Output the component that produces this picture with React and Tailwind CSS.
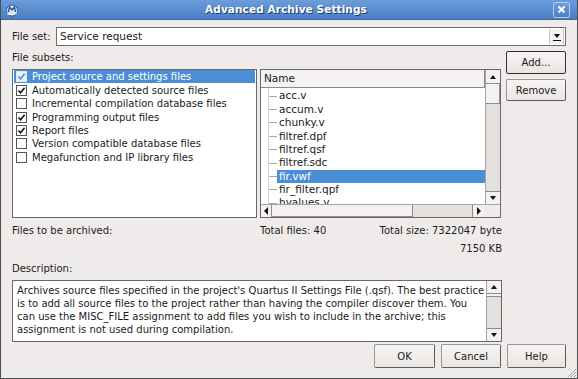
import React from "react";

const subsets = [
  { label: "Project source and settings files", checked: true, selected: true },
  { label: "Automatically detected source files", checked: true },
  { label: "Incremental compilation database files", checked: false },
  { label: "Programming output files", checked: true },
  { label: "Report files", checked: true },
  { label: "Version compatible database files", checked: false },
  { label: "Megafunction and IP library files", checked: false },
];

const files = [
  "acc.v",
  "accum.v",
  "chunky.v",
  "filtref.dpf",
  "filtref.qsf",
  "filtref.sdc",
  "fir.vwf",
  "fir_filter.qpf",
  "hvalues.v",
];

function Arrow({ dir }) {
  const pts = {
    up: "1,5 4,1 7,5",
    down: "1,1 4,5 7,1",
    left: "5,0 1,4 5,8",
    right: "1,0 5,4 1,8",
  }[dir];
  const vertical = dir === "up" || dir === "down";
  return (
    <svg width={vertical ? 8 : 6} height={vertical ? 6 : 8} viewBox={vertical ? "0 0 8 6" : "0 0 6 8"}>
      <polygon points={pts} fill="#111" />
    </svg>
  );
}

function CheckBox({ checked, selected }) {
  return (
    <div
      className={`w-[11px] h-[11px] flex items-center justify-center shrink-0 border ${
        selected ? "bg-[#eaf2fc] border-[#dce8f7]" : "bg-white border-[#555]"
      }`}
    >
      {checked && (
        <svg width="9" height="9" viewBox="0 0 9 9">
          <path
            d="M1.5 4.5 L3.6 6.8 L7.6 1.8"
            fill="none"
            stroke={selected ? "#4a89d3" : "#111"}
            strokeWidth="1.6"
          />
        </svg>
      )}
    </div>
  );
}

function Button({ children, isDefault, className = "" }) {
  return (
    <div
      className={`flex items-center justify-center rounded-[2px] bg-gradient-to-b from-[#f7f5f4] to-[#e9e5e2] ${
        isDefault
          ? "border border-[#2f2f2f]"
          : "border border-[#9a9794] border-r-[#5e5c5a] border-b-[#5e5c5a]"
      } ${className}`}
    >
      {children}
    </div>
  );
}

export default function App() {
  return (
    <div className="relative w-[578px] h-[379px] flex flex-col bg-[#efebea] border border-t-0 border-[#4e4e4e] font-['DejaVu_Sans',sans-serif] text-[10px] text-[#1b1b1b] overflow-hidden">
      {/* Title bar */}
      <div className="h-[20px] shrink-0 flex items-center px-[4px] bg-gradient-to-b from-[#6b9ddb] to-[#4a7dc3] border-b border-[#3b689f]">
        <svg width="14" height="14" viewBox="0 0 14 14" className="shrink-0">
          <circle cx="7" cy="7.5" r="5.5" fill="#d9e6f6" stroke="#2b5896" strokeWidth="1" />
          <path d="M3.5 9 L4.5 4 L7 7 L9.5 4 L10.5 9" fill="none" stroke="#1f4f8f" strokeWidth="1.3" />
          <path d="M2 11 Q7 13 12 10" fill="none" stroke="#ffffff" strokeWidth="1" />
        </svg>
        <div className="flex-1 text-center font-bold text-[10.5px] text-white [text-shadow:1px_1px_0_#203f6c] tracking-[0.1px]">
          Advanced Archive Settings
        </div>
        <div className="w-[17px] h-[16px] rounded-[2px] border border-[#b4cdee] bg-gradient-to-b from-[#6e9fdd] to-[#4a7ec4] flex items-center justify-center mr-[3px]">
          <svg width="9" height="9" viewBox="0 0 9 9">
            <path d="M1.5 1.5 L7.5 7.5 M7.5 1.5 L1.5 7.5" stroke="#fff" strokeWidth="2" />
          </svg>
        </div>
      </div>

      {/* Body */}
      <div className="flex-1 flex flex-col pl-[11px] pr-[11px]">
        {/* File set */}
        <div className="mt-[7px] h-[19px] flex items-center">
          <div className="w-[44px] shrink-0">File set:</div>
          <div className="flex-1 h-[19px] bg-white border border-[#6f6d6b] flex items-center">
            <div className="flex-1 pl-[3px] text-[10.5px]">Service request</div>
            <div className="w-[15px] h-[15px] mr-[1px] flex flex-col items-center justify-center gap-[1px] border-l border-r border-[#c7c3c0] bg-[#f6f4f3]">
              <Arrow dir="down" />
              <div className="w-[8px] h-[1px] bg-[#111]" />
            </div>
          </div>
        </div>

        {/* Subsets row */}
        <div className="mt-[5px] flex gap-[5px]">
          <div className="w-[490px] flex flex-col">
            <div className="h-[18px] pt-[1px] leading-[12px]">File subsets:</div>
            <div className="h-[149px] flex gap-[3px]">
              {/* Left checklist */}
              <div className="w-[245px] h-full bg-white border border-[#6b6968] pt-[0px] px-[1px]">
                {subsets.map((s) => (
                  <div
                    key={s.label}
                    className={`h-[13.45px] flex items-center gap-[5px] pl-[2px] ${
                      s.selected ? "bg-[#4b8ed6] text-white" : ""
                    }`}
                  >
                    <CheckBox checked={s.checked} selected={s.selected} />
                    <span className="leading-[13px] whitespace-nowrap">{s.label}</span>
                  </div>
                ))}
              </div>

              {/* Tree */}
              <div className="flex-1 h-full bg-white border border-[#6b6968] flex flex-col">
                <div className="flex-1 flex min-h-0">
                  <div className="flex-1 flex flex-col min-w-0 overflow-hidden">
                    <div className="h-[18px] shrink-0 flex items-center pl-[3px] bg-[#f5f3f2] border-b border-[#8d8a88] border-r text-[10.5px]">
                      Name
                    </div>
                    <div className="relative flex-1 pt-[1.5px] overflow-hidden">
                      <div className="absolute left-[7px] top-0 bottom-0 w-[1px] bg-[#d4d1cf]" />
                      {files.map((f) => (
                        <div key={f} className="h-[13.4px] flex items-center pl-[7px]">
                          <div className="w-[9px] h-[1px] bg-[#a9a6a4] shrink-0" />
                          <div
                            className={`flex-1 h-full flex items-center pl-[2px] whitespace-nowrap text-[10.5px] ${
                              f === "fir.vwf" ? "bg-[#4b8ed6] text-white" : ""
                            }`}
                          >
                            {f}
                          </div>
                        </div>
                      ))}
                    </div>
                  </div>
                  {/* Vertical scrollbar */}
                  <div className="w-[15px] flex flex-col bg-[#e4e0dd] border-l border-[#a8a4a1]">
                    <div className="h-[14px] flex items-center justify-center bg-[#f4f2f0] border-b border-[#8f8b88]">
                      <Arrow dir="up" />
                    </div>
                    <div className="h-[20px] bg-[#f4f2f0] border-b border-r border-[#8f8b88]" />
                    <div className="flex-1" />
                    <div className="h-[13px] flex items-center justify-center bg-[#f4f2f0] border-t border-[#8f8b88]">
                      <Arrow dir="down" />
                    </div>
                  </div>
                </div>
                {/* Horizontal scrollbar */}
                <div className="h-[13px] shrink-0 flex border-t border-[#a8a4a1]">
                  <div className="flex-1 flex bg-[#e4e0dd]">
                    <div className="w-[11px] flex items-center justify-center bg-[#f4f2f0] border-r border-[#8f8b88]">
                      <Arrow dir="left" />
                    </div>
                    <div className="w-[141px] bg-[#f4f2f0] border-r border-b border-[#8f8b88]" />
                    <div className="flex-1" />
                    <div className="w-[12px] flex items-center justify-center bg-[#f4f2f0] border-l border-[#8f8b88]">
                      <Arrow dir="right" />
                    </div>
                  </div>
                  <div className="w-[16px] bg-[#efebea]" />
                </div>
              </div>
            </div>
          </div>

          {/* Side buttons */}
          <div className="w-[60px] flex flex-col">
            <Button isDefault className="h-[23px]">Add...</Button>
            <Button className="h-[22px] mt-[5px]">Remove</Button>
          </div>
        </div>

        {/* Totals */}
        <div className="mt-[7px] w-[490px] h-[12px] leading-[12px] flex">
          <div className="w-[248px]">Files to be archived:</div>
          <div className="w-[118px]">Total files: 40</div>
          <div className="flex-1 text-right whitespace-nowrap">Total size: 7322047 byte</div>
        </div>
        <div className="mt-[6px] w-[490px] h-[12px] leading-[12px] text-right">7150 KB</div>

        <div className="mt-[8px] h-[12px] leading-[12px]">Description:</div>

        {/* Description box */}
        <div className="mt-[5px] w-[490px] h-[62px] bg-white border border-[#6b6968] flex">
          <div className="flex-1 pl-[4px] pt-[3px] leading-[13px] whitespace-nowrap overflow-hidden">
            <div>Archives source files specified in the project's Quartus II Settings File (.qsf). The best practice</div>
            <div>is to add all source files to the project rather than having the compiler discover them. You</div>
            <div>can use the MISC_FILE assignment to add files you wish to include in the archive; this</div>
            <div>assignment is not used during compilation.</div>
          </div>
          <div className="w-[15px] flex flex-col bg-[#e4e0dd] border-l border-[#a8a4a1]">
            <div className="h-[13px] flex items-center justify-center bg-[#f4f2f0] border-b border-[#8f8b88]">
              <Arrow dir="up" />
            </div>
            <div className="h-[3px] bg-[#f4f2f0] border-b border-[#8f8b88]" />
            <div className="flex-1" />
            <div className="h-[13px] flex items-center justify-center bg-[#f4f2f0] border-t border-[#8f8b88]">
              <Arrow dir="down" />
            </div>
          </div>
        </div>

        {/* Dialog buttons */}
        <div className="mt-[2px] flex justify-end gap-[6px]">
          <Button className="w-[61px] h-[24px]">OK</Button>
          <Button className="w-[60px] h-[24px]">Cancel</Button>
          <Button className="w-[59px] h-[24px]">Help</Button>
        </div>
      </div>

      {/* Resize grip */}
      <svg width="12" height="12" viewBox="0 0 12 12" className="absolute right-0 bottom-0">
        <path d="M11 3 L3 11 M11 6 L6 11 M11 9 L9 11" stroke="#a5a19e" strokeWidth="1" />
      </svg>
    </div>
  );
}
